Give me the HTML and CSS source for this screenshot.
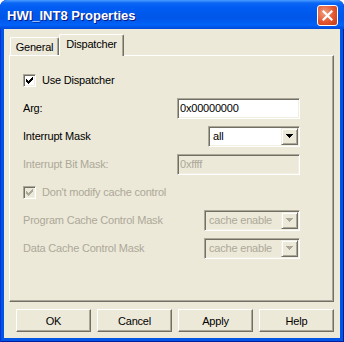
FILE: index.html
```html
<!DOCTYPE html>
<html lang="en">
<head>
    <meta charset="UTF-8">
    <title>HWI_INT8 Properties</title>
    <link rel="stylesheet" href="styles.css">
</head>
<body>
    <div class="window">
        <div class="titlebar">
            <span class="title">HWI_INT8 Properties</span>
            <div class="close">
                <svg width="11" height="11" viewBox="0 0 11 11"><path d="M1.5 1.5L9.5 9.5M9.5 1.5L1.5 9.5" stroke="#fff" stroke-width="2.2" stroke-linecap="square"/></svg>
            </div>
        </div>
        <div class="client">
            <div class="tabs">
                <div class="tab">General</div>
                <div class="tab active">Dispatcher</div>
            </div>
            <div class="page">
                <div class="row">
                    <label class="check">
                        <span class="box"><svg width="7" height="7" viewBox="0 0 7 7" shape-rendering="crispEdges"><path d="M0 2h1v3h-1zM1 3h1v3h-1zM2 4h1v3h-1zM3 3h1v3h-1zM4 2h1v3h-1zM5 1h1v3h-1zM6 0h1v3h-1z" fill="#000"/></svg></span>
                        Use Dispatcher
                    </label>
                </div>
                <div class="row">
                    <span>Arg:</span>
                    <div class="edit wide">0x00000000</div>
                </div>
                <div class="row">
                    <span>Interrupt Mask</span>
                    <div class="combo mask">
                        <span class="value">all</span>
                        <span class="drop"><svg width="7" height="4" viewBox="0 0 7 4" shape-rendering="crispEdges"><path d="M0 0h7v1h-1v1h-1v1h-1v1h-1v-1h-1v-1h-1v-1h-1z" fill="#000"/></svg></span>
                    </div>
                </div>
                <div class="row disabled">
                    <span>Interrupt Bit Mask:</span>
                    <div class="edit wide">0xffff</div>
                </div>
                <div class="row disabled">
                    <label class="check">
                        <span class="box"><svg width="7" height="7" viewBox="0 0 7 7" shape-rendering="crispEdges"><path d="M0 2h1v3h-1zM1 3h1v3h-1zM2 4h1v3h-1zM3 3h1v3h-1zM4 2h1v3h-1zM5 1h1v3h-1zM6 0h1v3h-1z" fill="#aca899"/></svg></span>
                        Don't modify cache control
                    </label>
                </div>
                <div class="row disabled">
                    <span>Program Cache Control Mask</span>
                    <div class="combo cache">
                        <span class="value">cache enable</span>
                        <span class="drop"><svg width="7" height="4" viewBox="0 0 7 4" shape-rendering="crispEdges"><path d="M0 0h7v1h-1v1h-1v1h-1v1h-1v-1h-1v-1h-1v-1h-1z" fill="#aca899"/></svg></span>
                    </div>
                </div>
                <div class="row disabled">
                    <span>Data Cache Control Mask</span>
                    <div class="combo cache">
                        <span class="value">cache enable</span>
                        <span class="drop"><svg width="7" height="4" viewBox="0 0 7 4" shape-rendering="crispEdges"><path d="M0 0h7v1h-1v1h-1v1h-1v1h-1v-1h-1v-1h-1v-1h-1z" fill="#aca899"/></svg></span>
                    </div>
                </div>
            </div>
            <div class="buttons">
                <div class="button">OK</div>
                <div class="button">Cancel</div>
                <div class="button">Apply</div>
                <div class="button">Help</div>
            </div>
        </div>
    </div>
</body>
</html>
```

FILE: styles.css
```css
body {
    margin: 0;
    padding: 0;
    background-color: #ffffff;
    font-family: 'Liberation Sans', Arial, sans-serif;
    font-size: 11px;
    color: #000000;
}
.window {
    width: 344px;
    height: 342px;
    box-sizing: border-box;
    display: flex;
    flex-direction: column;
    background-color: #0055e5;
    border-radius: 7px 7px 0 0;
    box-shadow: inset 1px 0 #0831d9, inset -1px -1px #001ea0;
    overflow: hidden;
}
.titlebar {
    height: 29px;
    flex-shrink: 0;
    display: flex;
    align-items: center;
    justify-content: space-between;
    padding: 0 6px 0 7px;
    background: linear-gradient(to bottom, #4a9dff 0, #0a66f4 3px, #005cf2 8px, #0056e8 18px, #0062f8 25px, #004ada 29px);
    border-radius: 7px 7px 0 0;
}
.title {
    color: #ffffff;
    font-weight: bold;
    font-size: 13px;
    text-shadow: 1px 1px #0a1883;
    padding-top: 1px;
}
.close {
    width: 19px;
    height: 19px;
    margin-top: 1px;
    display: flex;
    align-items: center;
    justify-content: center;
    border: 1px solid #ffffff;
    border-radius: 3px;
    background: radial-gradient(circle at 35% 35%, #f0a080 0, #e2552f 55%, #c13a18 100%);
}
.client {
    flex: 1;
    margin: 0 4px 4px;
    padding: 5px 6px 0 5px;
    background-color: #ece9d8;
    display: flex;
    flex-direction: column;
    letter-spacing: -0.2px;
}
.tabs {
    height: 21px;
    display: flex;
    align-items: flex-end;
    padding-left: 1px;
    position: relative;
    z-index: 1;
}
.tab {
    height: 18px;
    box-sizing: border-box;
    display: flex;
    align-items: center;
    justify-content: center;
    border-top: 1px solid #ffffff;
    border-left: 1px solid #ffffff;
    border-right: 1px solid #716f64;
    border-radius: 2px 2px 0 0;
    box-shadow: inset -1px 0 #aca899;
    width: 49px;
    padding-top: 1px;
}
.tab.active {
    width: 65px;
    height: 22px;
    margin-bottom: -1px;
    background-color: #ece9d8;
    padding-top: 0;
    padding-bottom: 3px;
}
.page {
    height: 247px;
    box-sizing: border-box;
    border-top: 1px solid #ffffff;
    border-left: 1px solid #ffffff;
    border-right: 1px solid #716f64;
    border-bottom: 1px solid #716f64;
    box-shadow: inset -1px -1px #aca899;
    padding: 10px 33px 0 13px;
}
.row {
    height: 28px;
    display: flex;
    align-items: center;
    justify-content: space-between;
}
.row.disabled {
    color: #aca899;
}
.check {
    display: flex;
    align-items: center;
    gap: 6px;
}
.box {
    width: 13px;
    height: 13px;
    box-sizing: border-box;
    display: flex;
    align-items: center;
    justify-content: center;
    background-color: #ffffff;
    border: 1px solid;
    border-color: #aca899 #ffffff #ffffff #aca899;
    box-shadow: inset 1px 1px #716f64, inset -1px -1px #f1efe2;
}
.disabled .box {
    background-color: #ece9d8;
}
.edit,
.combo {
    height: 21px;
    box-sizing: border-box;
    display: flex;
    align-items: center;
    background-color: #ffffff;
    border: 1px solid;
    border-color: #aca899 #ffffff #ffffff #aca899;
    box-shadow: inset 1px 1px #716f64, inset -1px -1px #f1efe2;
}
.edit {
    padding-left: 2px;
}
.disabled .edit,
.disabled .combo {
    background-color: #ece9d8;
}
.wide {
    width: 123px;
}
.mask {
    width: 92px;
}
.cache {
    width: 96px;
}
.combo {
    justify-content: space-between;
    padding: 1px 1px 1px 4px;
}
.drop {
    width: 17px;
    height: 17px;
    box-sizing: border-box;
    display: flex;
    align-items: center;
    justify-content: center;
    background-color: #ece9d8;
    border: 1px solid;
    border-color: #f1efe2 #716f64 #716f64 #f1efe2;
    box-shadow: inset 1px 1px #ffffff, inset -1px -1px #aca899;
}
.buttons {
    display: flex;
    justify-content: flex-end;
    gap: 6px;
    margin-top: 7px;
}
.button {
    width: 75px;
    height: 23px;
    box-sizing: border-box;
    display: flex;
    align-items: center;
    justify-content: center;
    background-color: #ece9d8;
    border: 1px solid;
    border-color: #ffffff #716f64 #716f64 #ffffff;
    box-shadow: inset -1px -1px #aca899;
}
```
